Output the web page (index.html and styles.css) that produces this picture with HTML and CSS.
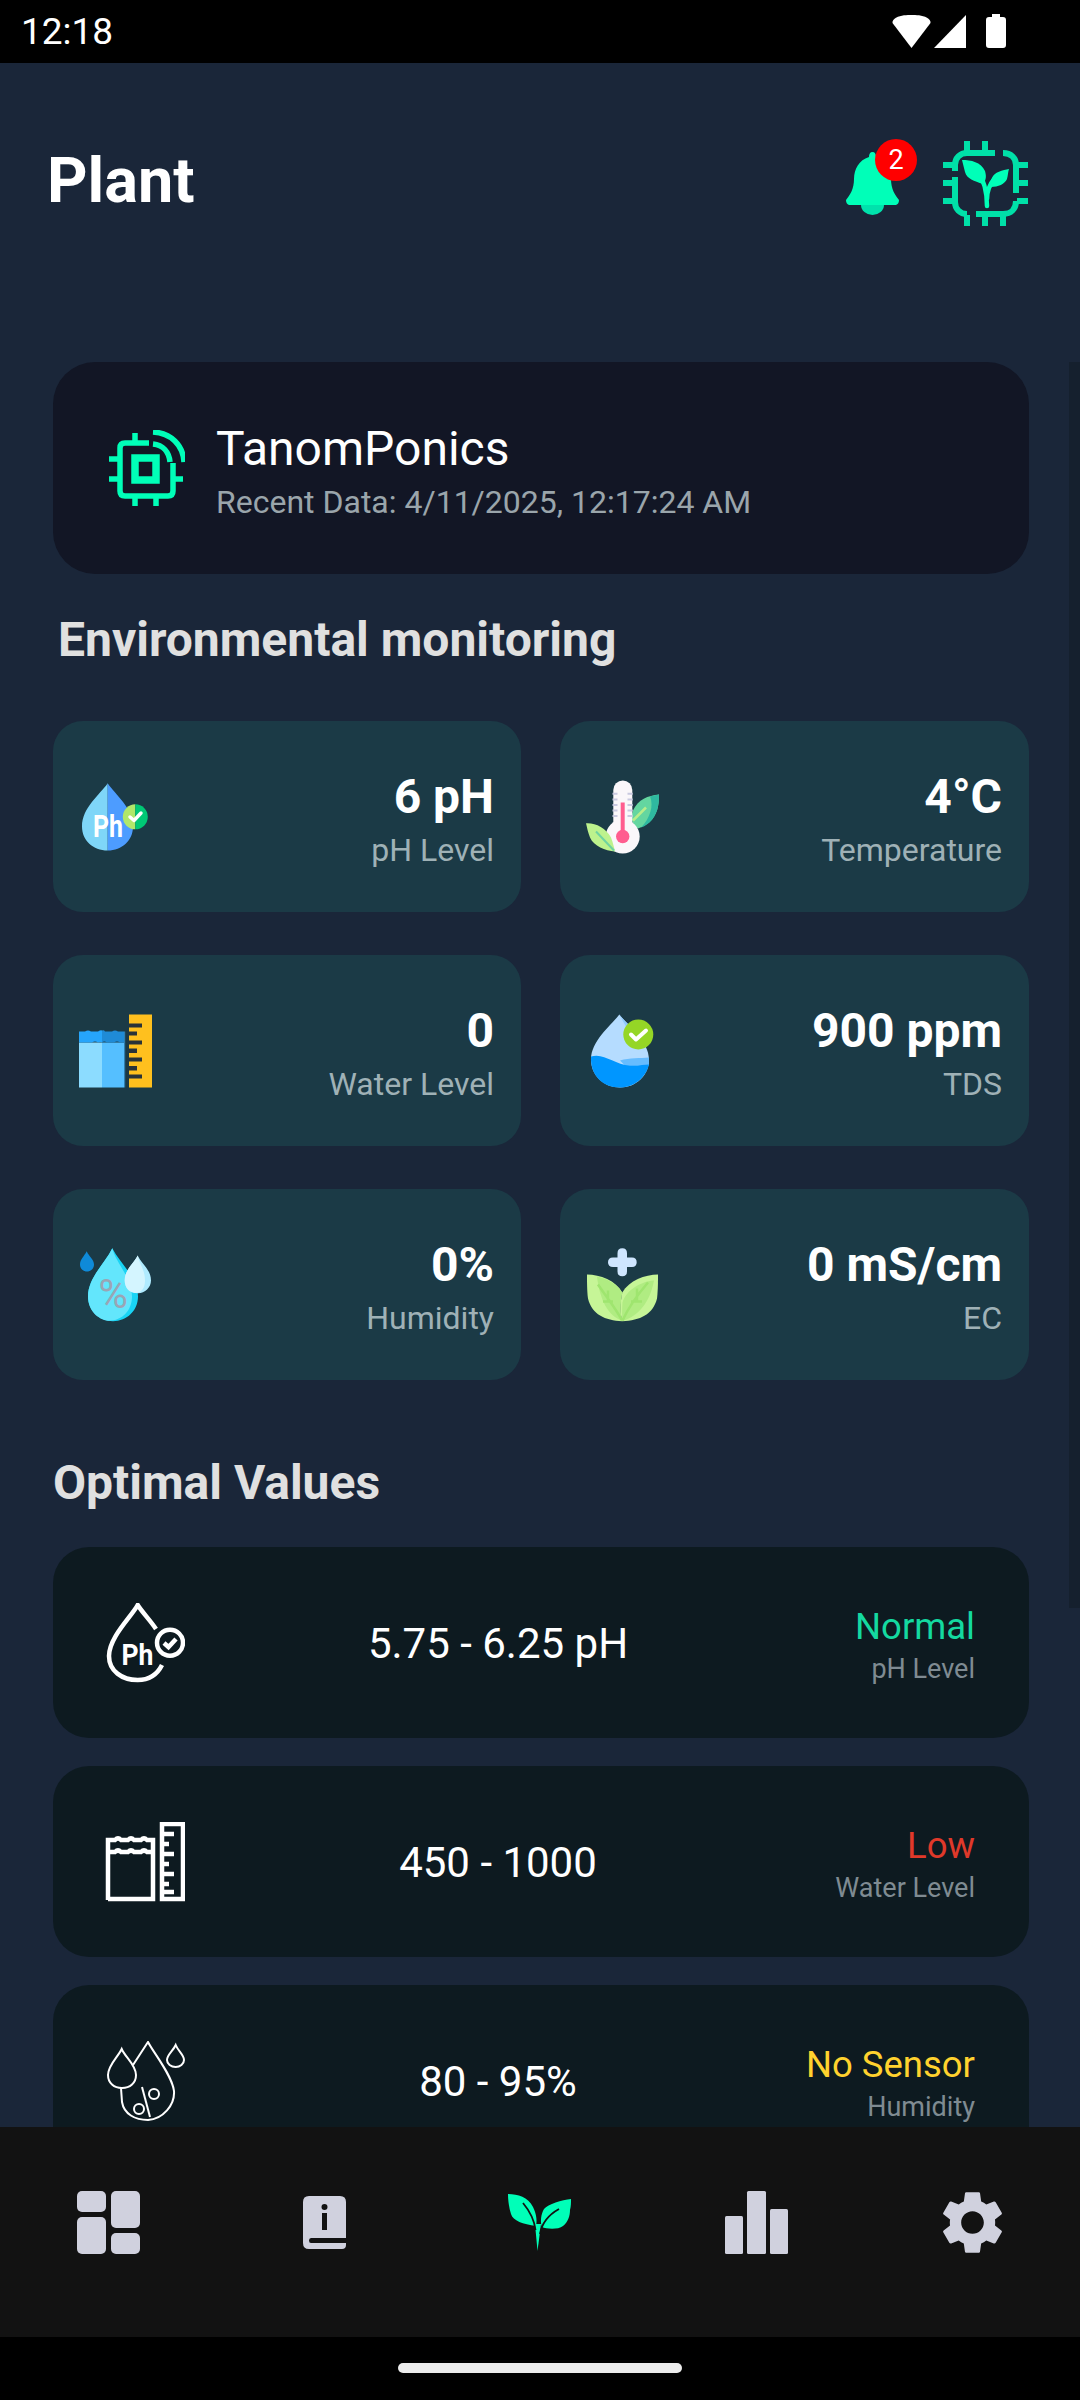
FILE: index.html
```html
<!DOCTYPE html>
<html lang="en">
<head>
<meta charset="utf-8">
<title>Plant</title>
<link rel="stylesheet" href="styles.css">
</head>
<body>
<div class="app">
  <div class="status">
    <span class="clock">12:18</span>
    <div class="status-icons">
      <svg class="si-wifi" viewBox="0 0 39 33"><path d="M19.500 33 L0.500 8 C0 6 2 4 4 2.800 C9 0 15 0 19.500 0 C24 0 30 0 35 2.800 C37 4 39 6 38.500 8Z"/></svg>
      <svg class="si-signal" viewBox="0 0 32 33"><path d="M32 0V33H0Z"/></svg>
      <svg class="si-battery" viewBox="0 0 20 34"><path d="M6 0H14V3H17Q20 3 20 6V31Q20 34 17 34H3Q0 34 0 31V6Q0 3 3 3H6Z"/></svg>
    </div>
  </div>

  <main class="main">
    <div class="scrollbar"></div>
    <header class="header">
      <h1 class="title">Plant</h1>
      <div class="bell">
        <svg class="bell-svg" viewBox="0 0 53 63">
          <path class="mint" d="M26.500 0C29 0 30 2 30 5C40 8 45 17 45 27C45 37 49 43 53 48Q53 52 50 53H3Q0 52 0 48C4 43 8 37 8 27C8 17 13 8 23 5C23 2 24 0 26.500 0Z"/>
          <path class="mint-dim" d="M15 53A11.500 10 0 0 0 38 53Z"/>
        </svg>
        <span class="badge">2</span>
      </div>
      <svg class="chip-plant" viewBox="0 0 85 85">
        <g class="chip-lines">
          <path d="M24 0V11M42 0V11M0 24H11M0 42H11M0 60H11M85 24H74M85 42H74M85 60H74M42 74V85M24 74V85M60 74V85"/>
          <path d="M12 30V24C12 17 17 12 24 12H52"/>
          <path d="M60 12C68 12 73 17 73 24V52"/>
          <path d="M73 60C73 68 68 73 60 73H33"/>
          <path d="M24 73C17 73 12 68 12 61V36"/>
        </g>
        <path class="mint" d="M19 19C28 19 38 21 42 30C43 34 44 38 40 43C31 40 24 38 22 31C21 27 20 23 19 19Z"/>
        <path class="mint" d="M66 28C60 29 51 31 49 37C47 40 47 43 48 46C55 46 62 43 64 38C65 34 65 31 66 28Z"/>
        <path class="plant-stem" d="M34 29C39 36 44 46 44 65M44 58C44 50 46 44 52 37"/>
      </svg>
    </header>

    <section class="hero card-wide">
      <svg class="hero-icon" viewBox="0 0 76 76">
        <g class="hero-lines">
          <path d="M26 3V13M26 66V76M47 66V76M0 29H11M0 49H11M64 49H74"/>
          <path d="M40 13H16Q11 13 11 18V61Q11 66 16 66H59Q64 66 64 61V33"/>
          <rect class="hero-core" x="26" y="28" width="21" height="22"/>
          <path d="M44 14C54 15 60 22 61 32"/>
          <path d="M44 2C62 3 74 15 75 32"/>
        </g>
      </svg>
      <div class="hero-text">
        <div class="hero-name">TanomPonics</div>
        <div class="hero-date">Recent Data: 4/11/2025, 12:17:24 AM</div>
      </div>
    </section>

    <h2 class="env-title">Environmental monitoring</h2>

    <section class="sensors">
      <div class="sensor">
        <svg class="sensor-icon" viewBox="15 26.500 80 80">
          <path fill="#7fd6f8" d="M47.700 32.700C40 44 22 57 22 76C22 90 33 100 47.700 100Z"/>
          <path fill="#4d9cff" d="M47.700 32.700C55 44 73 57 73 76C73 90 62 100 47.700 100Z"/>
          <text class="ph-text" x="33" y="86" font-size="31" textLength="30" lengthAdjust="spacingAndGlyphs">Ph</text>
          <path fill="#b1e76a" d="M75.300 53.800A12.500 12.500 0 0 0 75.300 78.800Z"/>
          <path fill="#00c875" d="M75.300 53.800A12.500 12.500 0 0 1 75.300 78.800Z"/>
          <path class="tick" stroke-width="3.500" d="M70 66.500L74 70L81 62.500"/>
        </svg>
        <div class="sensor-text"><div class="sensor-value">6 pH</div><div class="sensor-label">pH Level</div></div>
      </div>
      <div class="sensor">
        <svg class="sensor-icon" viewBox="12 26.500 80 80">
          <path fill="#64d6a0" d="M89 44C78 45 68 49 63 60C60 68 62 74 68 78C80 74 86 66 88 56C89 51 89 47 89 44Z"/>
          <path fill="#2fb9a0" d="M89 44C86 45 82 45 80 46C84 55 80 68 71 77C80 74 86 66 88 56C89 51 89 47 89 44Z"/>
          <path stroke="#b8ee8a" stroke-width="2.500" fill="none" d="M76 57L63 70"/>
          <circle cx="52.700" cy="86" r="17" fill="#faf7fa"/>
          <rect x="43.300" y="30" width="19" height="60" rx="9.500" fill="#faf7fa"/>
          <path stroke="#c9c9e0" stroke-width="2" fill="none" d="M42.500 43.300H47.500M42.500 49H47.500M42.500 54.500H47.500M42.500 60H47.500M42.500 65.500H47.500M57.500 43.300H62.700M57.500 49H62.700M57.500 54.500H62.700M57.500 60H62.700M57.500 65.500H62.700"/>
          <rect x="50.700" y="52" width="4" height="34" fill="#ff5d8f"/>
          <circle cx="52.700" cy="86" r="6.700" fill="#ff5d8f"/>
          <path fill="#bdf28d" d="M16 72.700C25 72 36 77 41 87C43 92 44 97 45 101C35 100 24 96 20 87C18 82 17 77 16 72.700Z"/>
          <path stroke="#6fd3a0" stroke-width="2" fill="none" d="M26 81L44 100"/>
        </svg>
        <div class="sensor-text"><div class="sensor-value">4°C</div><div class="sensor-label">Temperature</div></div>
      </div>
      <div class="sensor">
        <svg class="sensor-icon" viewBox="15 20.500 80 80">
          <path fill="#8cdcff" d="M19 52H42V97H19Z"/>
          <path fill="#55bfff" d="M42 52H64V97H42Z"/>
          <path fill="#26a5fb" d="M19 41H25Q28 39 31 41H38Q41 39 42 40V52Q41 51 38 52Q35 50 32 52H19Z"/>
          <path fill="#1f8bd6" d="M42 40Q44 39 45 41H52Q55 39 58 41H64V52H60Q57 50 54 52H47Q44 50 42 52Z"/>
          <rect x="64" y="41" width="1.200" height="56" fill="#2f7fb0"/>
          <rect x="69" y="24" width="23" height="73" fill="#ffc01e"/>
          <path fill="#2a3338" d="M69 33H82V37H69ZM69 41H77V45H69ZM69 50H82V54H69ZM69 58H77V62.500H69ZM69 67H82V71H69ZM69 75.500H77V80H69ZM69 84H82V88H69Z"/>
        </svg>
        <div class="sensor-text"><div class="sensor-value">0</div><div class="sensor-label">Water Level</div></div>
      </div>
      <div class="sensor">
        <svg class="sensor-icon" viewBox="12 20.500 80 80">
          <path fill="#b5dcff" d="M49.300 24C42 34 21 50 21 69C21 85 34 97 50 97C66 97 79 85 79 69C79 50 57 34 49.300 24Z"/>
          <path fill="#8fcaff" d="M49.300 24C53 29 58 33 62 38L58 40C55 34 52 29 49.300 24Z"/>
          <path fill="#66bcff" d="M50 70C60 67 70 68 79 67V75H55Z"/>
          <path fill="#0096ff" d="M21 66C34 62 44 74 60 75C68 75.500 74 74 79 74C76 87 64 97 50 97C32 97 20 84 21 66Z"/>
          <circle cx="68.300" cy="44" r="15" fill="#95d626"/>
          <path class="tick" stroke-width="4" d="M61 44L66 49L76 40"/>
        </svg>
        <div class="sensor-text"><div class="sensor-value">900 ppm</div><div class="sensor-label">TDS</div></div>
      </div>
      <div class="sensor">
        <svg class="sensor-icon" viewBox="15 14.500 80 80">
          <path fill="#0f8ad8" d="M26.700 20.700C24 26 20 29 20 34C20 38 23 41 27 41C31 41 34 38 34 34C34 29 29 26 26.700 20.700Z"/>
          <path fill="#19d4f5" d="M52.300 17.700C45 33 28 47 28 66C28 80 39 90.700 53 90.700C67 90.700 78 80 78 66C78 47 60 33 52.300 17.700Z"/>
          <path fill="#63e6fc" d="M52.300 17.700C45 33 28 47 28 66C28 80 38 89 48 90.200C62 90.700 72 80 72 66C72 47 56 33 52.300 17.700Z"/>
          <text class="pct-text" x="38.500" y="77" font-size="40">%</text>
          <path fill="#b0ebff" d="M77.700 25C74 33 64.700 39 64.700 50C64.700 57 70 62.700 78 62.700C85 62.700 91 57 91 50C91 39 81 33 77.700 25Z"/>
          <path fill="#d4f5ff" d="M77.700 25C74 33 64.700 39 64.700 50C64.700 57 69 62 75 62.500C82 62.700 85 57 85 50C85 39 79 33 77.700 25Z"/>
        </svg>
        <div class="sensor-text"><div class="sensor-value">0%</div><div class="sensor-label">Humidity</div></div>
      </div>
      <div class="sensor">
        <svg class="sensor-icon" viewBox="12 14.500 80 80">
          <path fill="#cfe6ff" d="M47.500 22.700Q47.500 17.700 52.300 17.700Q57 17.700 57 22.700V27H62Q66.700 27 66.700 31.700Q66.700 36.500 62 36.500H57V41Q57 45.700 52.300 45.700Q47.500 45.700 47.500 41V36.500H43Q38 36.500 38 31.700Q38 27 43 27H47.500Z"/>
          <path fill="#c6f597" d="M17 44C30 44 46 50 52.300 62C50 72 50 84 52.300 90.700C35 90 22 84 18 68C17 60 17 50 17 44Z"/>
          <path fill="#c6f597" d="M88 44C75 44 59 50 52.300 62C50 72 50 84 52.300 90.700C70 90 83 84 87 68C88 60 88 50 88 44Z"/>
          <path fill="#b0ec82" d="M27 46C36 48 47 53 52 62C50 72 50 84 52 90C38 85 30 70 27 46ZM84 50C70 51 56 60 52.500 72C52 80 52 85 52.500 90.500C68 86 80 72 84 50Z"/>
          <path stroke="#9fe56f" stroke-width="2.500" fill="none" d="M28 54C36 66 46 78 52 90M38 60V71M33 71H43M78 52C66 66 58 78 52.500 90M67 58V71M61 71H72"/>
        </svg>
        <div class="sensor-text"><div class="sensor-value">0 mS/cm</div><div class="sensor-label">EC</div></div>
      </div>
    </section>

    <h2 class="opt-title">Optimal Values</h2>

    <section class="optimal">
      <div class="opt-row">
        <svg class="opt-icon" viewBox="15 12 80 80">
          <path class="line-w" d="M66 38C60 29 52 21 47.700 14C42 25 19 46 19 65C19 80 32 89 47.700 89C58 89 67 84 72 74"/>
          <circle class="line-w" cx="80" cy="51.700" r="13"/>
          <path class="line-w" stroke-width="3" d="M74 52L78.500 56L86 48"/>
          <text class="ph-text" x="31.500" y="74" font-size="29" textLength="32" lengthAdjust="spacingAndGlyphs">Ph</text>
        </svg>
        <div class="opt-value">5.75 - 6.25 pH</div>
        <div class="opt-status"><div class="st st-normal">Normal</div><div class="st-label">pH Level</div></div>
      </div>
      <div class="opt-row">
        <svg class="opt-icon" viewBox="15 232 80 80">
          <path class="line-w" d="M18 310V250H25Q28 247 31 250H38Q41 247 44 250H51Q54 247 57 250H63V309H18Z"/>
          <path class="line-w" d="M18 262H25Q28 259 31 262H38Q41 259 44 262H51Q54 259 57 262H63"/>
          <path class="line-w" d="M72 234H93V309H72ZM72 244H84M72 254H79M72 264H84M72 274H79M72 284H84M72 294H79M72 302H84"/>
        </svg>
        <div class="opt-value">450 - 1000</div>
        <div class="opt-status"><div class="st st-low">Low</div><div class="st-label">Water Level</div></div>
      </div>
      <div class="opt-row">
        <svg class="opt-icon" viewBox="15 452 80 80">
          <path class="line-thin" d="M31.700 460C28 468 18 476 18 486C18 494 24 499 32 499C40 499 46 494 46 486C46 476 35 468 31.700 460Z"/>
          <path class="line-thin" d="M43 476L58 453C63 463 82 486 84 502C85 516 73 530 58 531C45 531 34 525 32 513L31 499"/>
          <path class="line-thin" d="M85.700 456C83 462 77 466 77 471C77 475 81 478 85.700 478C90 478 94 475 94 471C94 466 88 462 85.700 456Z"/>
          <circle class="line-thin" cx="64" cy="505" r="5"/>
          <circle class="line-thin" cx="49" cy="520" r="5"/>
          <path class="line-thin" d="M52 498L60 528"/>
        </svg>
        <div class="opt-value">80 - 95%</div>
        <div class="opt-status"><div class="st st-nosensor">No Sensor</div><div class="st-label">Humidity</div></div>
      </div>
    </section>
  </main>

  <nav class="nav">
    <div class="nav-item">
      <svg class="nav-svg" viewBox="0 0 63 63">
        <rect x="0" y="0" width="29" height="21" rx="5"/>
        <rect x="0" y="26" width="29" height="37" rx="5"/>
        <rect x="34" y="0" width="29" height="37" rx="5"/>
        <rect x="34" y="42" width="29" height="21" rx="5"/>
      </svg>
    </div>
    <div class="nav-item">
      <svg class="nav-book" viewBox="0 0 43 53">
        <path fill-rule="evenodd" d="M6 0H37Q43 0 43 6V42H8Q6 42 6 44.500Q6 47 8 47H43V49Q43 53 39 53H6Q0 53 0 47V6Q0 0 6 0ZM21.500 8A3 3 0 1 0 21.500 14A3 3 0 1 0 21.500 8ZM19 17V34H24V17Z"/>
      </svg>
    </div>
    <div class="nav-item">
      <svg class="nav-plant" viewBox="0 0 64 57">
        <path d="M0 0C10 0 20 3 25 13C29 21 29 28 28 32C15 30 5 27 3 20C1 14 0 6 0 0Z"/>
        <path d="M63 5C54 6 40 10 36 15C33 20 32 28 34 33C38 35 50 36 55 32C60 28 62 22 62 16C63 12 63 9 63 5Z"/>
        <path d="M29.500 57L27 30H33Z"/>
        <path class="plant-vein" d="M15 9C20 15 26 23 27.500 36M51 15C42 20 34 28 32 40"/>
      </svg>
    </div>
    <div class="nav-item">
      <svg class="nav-svg" viewBox="0 0 63 63">
        <rect x="0" y="25" width="18" height="38" rx="1.500"/>
        <rect x="22" y="0" width="19" height="63" rx="1.500"/>
        <rect x="45" y="18" width="18" height="45" rx="1.500"/>
      </svg>
    </div>
    <div class="nav-item">
      <svg class="nav-svg" viewBox="2 2 20 20">
        <path d="M19.140 12.940c.04-.3.06-.61.06-.94 0-.32-.02-.64-.07-.94l2.030-1.580c.18-.14.23-.41.12-.61l-1.920-3.320c-.12-.22-.37-.29-.59-.22l-2.390.96c-.5-.38-1.030-.7-1.620-.94l-.36-2.540c-.04-.24-.24-.41-.48-.41h-3.840c-.24 0-.43.17-.47.41l-.36 2.540c-.59.24-1.130.57-1.620.94l-2.390-.96c-.22-.08-.47 0-.59.22L2.740 8.870c-.12.21-.08.47.12.61l2.030 1.580c-.05.3-.09.63-.09.94s.02.64.07.94l-2.030 1.580c-.18.14-.23.41-.12.61l1.920 3.320c.12.22.37.29.59.22l2.390-.96c.5.38 1.030.7 1.620.94l.36 2.540c.05.24.24.41.48.41h3.840c.24 0 .44-.17.47-.41l.36-2.540c.59-.24 1.130-.56 1.620-.94l2.390.96c.22.08.47 0 .59-.22l1.920-3.320c.12-.22.07-.47-.12-.61l-2.010-1.580zM12 15.600c-1.980 0-3.600-1.620-3.600-3.600s1.620-3.600 3.600-3.600 3.600 1.620 3.600 3.600-1.620 3.600-3.600 3.600z"/>
      </svg>
    </div>
  </nav>
  <div class="home"><div class="home-bar"></div></div>
</div>
</body>
</html>
```

FILE: styles.css
```css
* { box-sizing: border-box; }
html, body { margin: 0; padding: 0; background: #000; }
body { font-family: Roboto, "Noto Sans", sans-serif; color: #fff; }
.app { width: 1080px; height: 2400px; display: flex; flex-direction: column; overflow: hidden; }

.status { height: 63px; flex: none; background: #000; display: flex; align-items: center; justify-content: space-between; padding: 0 74px 0 21px; }
.clock { font-size: 37px; line-height: 63px; }
.status-icons { display: flex; align-items: center; margin-top: -1px; }
.status-icons svg { fill: #fff; display: block; }
.si-wifi { width: 39px; height: 33px; }
.si-signal { width: 32px; height: 33px; margin-left: 3px; }
.si-battery { width: 20px; height: 34px; margin-left: 20px; }

.main { flex: 1; min-height: 0; overflow: hidden; background: #1a2639; position: relative; }
.scrollbar { position: absolute; left: 1069px; top: 299px; width: 11px; height: 1246px; background: #15202e; }

.header { display: flex; align-items: center; height: 299px; padding: 0 52px 64px 47px; }
.title { flex: 1; margin: 0; font-size: 63px; font-weight: 700; line-height: 70px; }
.bell { position: relative; width: 53px; height: 63px; margin-right: 44px; margin-top: 6px; }
.bell-svg { display: block; width: 53px; height: 63px; }
.badge { position: absolute; left: 29px; top: -13px; width: 42px; height: 42px; border-radius: 50%; background: #ff0000; color: #fff; font-size: 27px; line-height: 42px; text-align: center; }
.chip-plant { width: 85px; height: 85px; display: block; margin-top: 6px; }
.mint { fill: #00ffb8; }
.mint-dim { fill: #00e2ac; }
.chip-lines path { fill: none; stroke: #00e0a8; stroke-width: 6; }
.plant-stem { fill: none; stroke: #00ffb8; stroke-width: 4.500; stroke-linecap: round; }

.hero { margin: 0 51px 0 53px; height: 212px; background: #121625; border-radius: 42px; display: flex; align-items: center; padding: 0 0 0 56px; }
.hero-icon { width: 76px; height: 76px; display: block; margin-right: 31px; flex: none; }
.hero-lines path, .hero-lines rect { fill: none; stroke: #00ffb8; stroke-width: 5.500; }
.hero-lines .hero-core { stroke-width: 7.500; }
.hero-text { margin-top: 5px; }
.hero-name { font-size: 48px; line-height: 54px; }
.hero-date { font-size: 32px; line-height: 36px; color: #9aa5ab; margin-top: 8px; }

.env-title { margin: 39px 0 0 58px; font-size: 48px; font-weight: 700; line-height: 54px; color: #e0e0e0; }

.sensors { display: grid; grid-template-columns: 468px 469px; grid-auto-rows: 191px; column-gap: 39px; row-gap: 43px; margin: 54px 51px 0 53px; }
.sensor { background: #1b3a46; border-radius: 30px; display: flex; align-items: center; justify-content: space-between; padding: 0 27px 0 22px; }
.sensor-icon { width: 80px; height: 80px; display: block; flex: none; }
.sensor-text { text-align: right; margin-top: 6px; }
.sensor-value { font-size: 48px; font-weight: 700; line-height: 54px; white-space: nowrap; }
.sensor-label { font-size: 32px; line-height: 38px; color: #9fb1b6; margin-top: 7px; white-space: nowrap; }
.ph-text { font-family: Roboto, sans-serif; font-weight: 700; fill: #fff; }
.pct-text { font-family: Roboto, sans-serif; fill: #9aa5b5; }
.tick { fill: none; stroke: #fff; stroke-linecap: round; stroke-linejoin: round; }

.opt-title { margin: 76px 0 0 53px; font-size: 48px; font-weight: 700; line-height: 54px; color: #e0e0e0; }

.optimal { display: flex; flex-direction: column; gap: 28px; margin: 37px 51px 0 53px; }
.opt-row { height: 191px; flex: none; background: #0d1a20; border-radius: 36px; display: grid; grid-template-columns: 80px 620px 170px; align-items: center; padding: 0 0 0 52px; }
.opt-icon { width: 80px; height: 80px; display: block; }
.line-w { fill: none; stroke: #fff; stroke-width: 4.500; }
.line-thin { fill: none; stroke: #fff; stroke-width: 2; }
.opt-value { font-size: 42px; text-align: center; padding-left: 6px; line-height: 48px; margin-top: 2px; }
.opt-status { text-align: right; white-space: nowrap; margin-top: 7px; }
.st { font-size: 36.500px; line-height: 42px; }
.st-normal { color: #14d9a0; }
.st-low { color: #e0392a; }
.st-nosensor { color: #ffd22e; }
.st-label { font-size: 27px; line-height: 34px; color: #7f8b92; margin-top: 4px; }

.nav { height: 210px; flex: none; background: #121212; display: grid; grid-template-columns: repeat(5, 1fr); align-items: center; padding-bottom: 20px; }
.nav-item { display: flex; justify-content: center; }
.nav-svg { width: 63px; height: 63px; display: block; fill: #d0d1de; }
.nav-book { width: 43px; height: 53px; display: block; fill: #d0d1de; }
.nav-plant { width: 64px; height: 57px; display: block; fill: #00ffb8; }
.plant-vein { fill: none; stroke: #121212; stroke-width: 1.800; }

.home { height: 63px; flex: none; background: #000; display: flex; justify-content: center; padding-top: 26px; }
.home-bar { width: 284px; height: 10px; border-radius: 5px; background: #ececec; }
```
